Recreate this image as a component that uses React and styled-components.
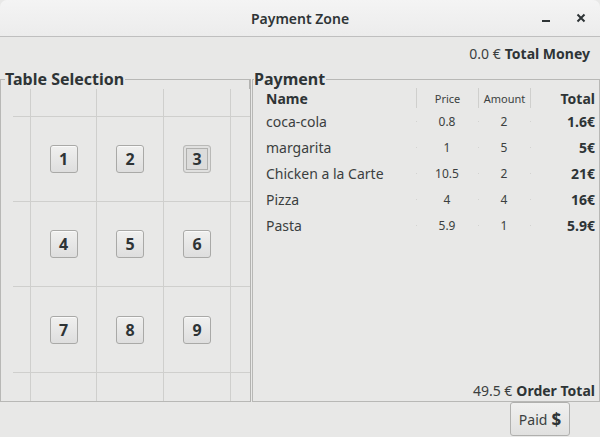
import React from "react";
import styled, { createGlobalStyle } from "styled-components";

const items = [
  { name: "coca-cola", price: "0.8", amount: "2", total: "1.6€" },
  { name: "margarita", price: "1", amount: "5", total: "5€" },
  { name: "Chicken a la Carte", price: "10.5", amount: "2", total: "21€" },
  { name: "Pizza", price: "4", amount: "4", total: "16€" },
  { name: "Pasta", price: "5.9", amount: "1", total: "5.9€" },
];

const tables = [1, 2, 3, 4, 5, 6, 7, 8, 9];

function App() {
  const cells = [];
  for (let r = 0; r < 5; r++) {
    for (let c = 0; c < 5; c++) {
      const inner = r > 0 && r < 4 && c > 0 && c < 4;
      const n = inner ? tables[(r - 1) * 3 + (c - 1)] : null;
      cells.push(
        <Cell key={`${r}-${c}`}>
          {n && <TableButton focused={n === 3}>{n}</TableButton>}
        </Cell>
      );
    }
  }

  return (
    <>
      <GlobalStyle />
      <Window>
        <TitleBar>
          <Title>Payment Zone</Title>
          <Controls>
            <MinIcon />
            <CloseIcon viewBox="0 0 10 10">
              <path d="M1.5 1.5 L8.5 8.5 M8.5 1.5 L1.5 8.5" />
            </CloseIcon>
          </Controls>
        </TitleBar>

        <Body>
          <MoneyRow>
            <Amount>0.0 €</Amount> <Strong>Total Money</Strong>
          </MoneyRow>

          <Panels>
            <LeftFrame>
              <Legend indent={4}>Table Selection</Legend>
              <TableGrid>{cells}</TableGrid>
            </LeftFrame>

            <RightFrame>
              <Legend indent={1}>Payment</Legend>
              <OrderTable>
                <HeadRow>
                  <NameHead>Name</NameHead>
                  <SmallHead>Price</SmallHead>
                  <SmallHead>Amount</SmallHead>
                  <TotalHead>Total</TotalHead>
                </HeadRow>
                {items.map((it) => (
                  <Row key={it.name}>
                    <NameCell>{it.name}</NameCell>
                    <NumCell>{it.price}</NumCell>
                    <NumCell>{it.amount}</NumCell>
                    <TotalCell>{it.total}</TotalCell>
                  </Row>
                ))}
              </OrderTable>
              <OrderTotal>
                <Amount>49.5 €</Amount> <Strong>Order Total</Strong>
              </OrderTotal>
            </RightFrame>
          </Panels>

          <Footer>
            <PaidButton>
              Paid <Dollar>$</Dollar>
            </PaidButton>
          </Footer>
        </Body>
      </Window>
    </>
  );
}

const GlobalStyle = createGlobalStyle`
  html, body {
    margin: 0;
    padding: 0;
    background: #e8e8e7;
  }
  body {
    font-family: "Noto Sans", "DejaVu Sans", sans-serif;
    color: #2e3436;
  }
`;

const Window = styled.div`
  width: 600px;
  height: 437px;
  display: flex;
  flex-direction: column;
  background: #e8e8e7;
  overflow: hidden;
`;

const TitleBar = styled.div`
  height: 37px;
  position: relative;
  display: flex;
  align-items: center;
  justify-content: center;
  background: linear-gradient(#f4f4f4, #ececec);
  border-bottom: 1px solid #bfbfbf;
  border-top-right-radius: 7px;
  border-top-left-radius: 7px;
  box-sizing: border-box;
  flex-shrink: 0;
`;

const Title = styled.div`
  font-size: 14px;
  font-weight: 600;
  color: #2e3436;
`;

const Controls = styled.div`
  position: absolute;
  right: 14px;
  top: 0;
  height: 36px;
  display: flex;
  align-items: center;
  gap: 26px;
`;

const MinIcon = styled.span`
  display: block;
  width: 8px;
  height: 2px;
  margin-top: 6px;
  background: #2e3436;
`;

const CloseIcon = styled.svg`
  width: 10px;
  height: 10px;
  stroke: #2e3436;
  stroke-width: 2;
  fill: none;
`;

const Body = styled.div`
  flex: 1;
  display: flex;
  flex-direction: column;
`;

const MoneyRow = styled.div`
  height: 31px;
  display: flex;
  align-items: center;
  justify-content: flex-end;
  padding-right: 10px;
  font-size: 14px;
  gap: 4px;
  margin-top: 1px;
  margin-bottom: 1px;
`;

const Amount = styled.span`
  color: #3b3f40;
`;

const Strong = styled.span`
  font-weight: 700;
`;

const Panels = styled.div`
  display: flex;
  height: 332px;
  align-items: stretch;
  flex-shrink: 0;
`;

const Frame = styled.fieldset`
  margin: 0;
  padding: 0;
  border: 1px solid #b8b8b6;
  min-width: 0;
  box-sizing: border-box;
  display: flex;
  flex-direction: column;
`;

const LeftFrame = styled(Frame)`
  width: 251px;
  border-right: 2px solid #b3b3b1;
`;

const RightFrame = styled(Frame)`
  width: 348px;
  margin-left: 1px;
`;

const Legend = styled.legend`
  font-size: 16px;
  font-weight: 700;
  padding: 0 1px 0 0;
  margin-left: ${(p) => p.indent}px;
  line-height: 18px;
`;

const TableGrid = styled.div`
  display: grid;
  grid-template-columns: 17px 65px 66px 66px 19px;
  grid-template-rows: 27px 84px 84px 85px 28px;
  gap: 1px;
  background: #cfcfcd;
  margin-left: 12px;
  margin-top: 1px;
  align-self: flex-start;
`;

const Cell = styled.div`
  background: #e8e8e7;
  display: flex;
  align-items: center;
  justify-content: center;
`;

const TableButton = styled.button`
  width: 28px;
  height: 28px;
  box-sizing: border-box;
  padding: 0;
  font-family: inherit;
  font-size: 16px;
  font-weight: 700;
  color: #2e3436;
  border: 1px solid #a9a9a7;
  border-radius: 3px;
  background: linear-gradient(#f0f0ef, #dedede);
  box-shadow: ${(p) =>
    p.focused
      ? "inset 0 0 0 2px #e0e0df, inset 0 0 0 3px #b0b0ae"
      : "inset 0 1px 0 #fafafa"};
  ${(p) => p.focused && "background: #dcdcdb; border-color: #b9b9b7;"}
`;

const OrderTable = styled.div`
  display: flex;
  flex-direction: column;
  padding: 0 4px 0 13px;
`;

const HeadRow = styled.div`
  display: grid;
  grid-template-columns: 150px 62px 52px 1fr;
  height: 20px;
  align-items: center;
`;

const Row = styled.div`
  display: grid;
  grid-template-columns: 150px 62px 52px 1fr;
  height: 26px;
  align-items: center;
`;

const NameHead = styled.div`
  font-size: 14px;
  font-weight: 700;
`;

const SmallHead = styled.div`
  height: 100%;
  display: flex;
  align-items: center;
  justify-content: center;
  font-size: 11px;
  color: #3b3f40;
  border-left: 1px solid #cfcfcd;
`;

const TotalHead = styled.div`
  height: 100%;
  display: flex;
  align-items: center;
  justify-content: flex-end;
  font-size: 14px;
  font-weight: 700;
  border-left: 1px solid #cfcfcd;
`;

const NameCell = styled.div`
  font-size: 14px;
  color: #3b3f40;
`;

const NumCell = styled.div`
  position: relative;
  text-align: center;
  font-size: 12px;
  color: #3b3f40;
  &::before {
    content: "";
    position: absolute;
    left: 0;
    top: 50%;
    width: 1px;
    height: 1px;
    background: #d3d3d1;
  }
`;

const TotalCell = styled(NumCell)`
  text-align: right;
  font-size: 14px;
  font-weight: 700;
  color: #2e3436;
`;

const OrderTotal = styled.div`
  margin-top: auto;
  display: flex;
  justify-content: flex-end;
  gap: 4px;
  font-size: 14px;
  padding: 0 4px 1px 0;
`;

const Footer = styled.div`
  display: flex;
  justify-content: flex-end;
  padding: 0 30px 0 0;
`;

const PaidButton = styled.button`
  width: 60px;
  height: 34px;
  box-sizing: border-box;
  font-family: inherit;
  font-size: 14px;
  color: #3b3f40;
  border: 1px solid #b0b0ae;
  border-radius: 3px;
  background: linear-gradient(#f0f0ef, #e0e0df);
  display: flex;
  align-items: center;
  justify-content: center;
  gap: 4px;
  padding: 0;
`;

const Dollar = styled.span`
  font-size: 17px;
  font-weight: 700;
  color: #2e3436;
`;

export default App;
